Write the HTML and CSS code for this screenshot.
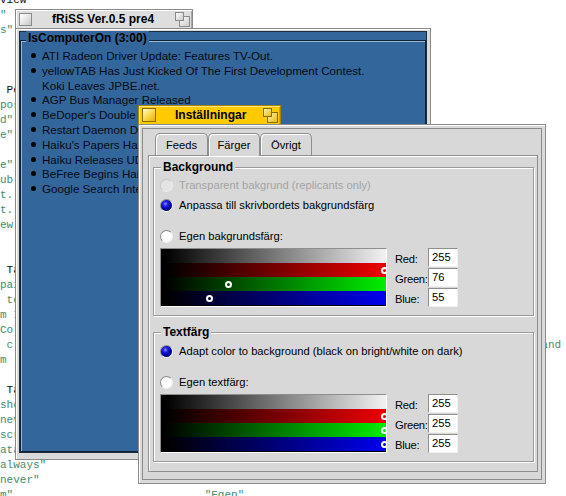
FILE: index.html
```html
<!DOCTYPE html>
<html lang="sv">
<head>
<meta charset="utf-8">
<title>fRiSS</title>
<link rel="stylesheet" href="styles.css">
</head>
<body>
<pre class="desk"><span class="k">view</span>
"
s"



<span class="k"> Pe</span>
pos
d"
e"

e"
ub
t.
t.
ew


<span class="k"> Ta</span>
pai
 te
m I
Col
 c                                                                                and
m '

<span class="k"> Ta</span>
sho
nev
scr
ata
always"
never"
m"                             "Egen"</pre>

<div class="win win-main">
  <div class="wtab wtab-main">
    <span class="closebox closebox-gray"></span>
    <span class="wtitle wtitle-main">fRiSS Ver.0.5 pre4</span>
    <svg class="zoombox" width="15" height="15" viewBox="0 0 15 15">
      <defs>
        <linearGradient id="zg" x1="0" y1="0" x2="1" y2="1">
          <stop offset="0" stop-color="#ffffff"/>
          <stop offset="1" stop-color="#c8c8c8"/>
        </linearGradient>
      </defs>
      <rect x="4.5" y="4.5" width="10" height="10" fill="url(#zg)" stroke="#8a8a8a"/>
      <rect x="0.5" y="0.5" width="8" height="8" fill="url(#zg)" stroke="#8a8a8a"/>
    </svg>
  </div>
  <div class="wframe wframe-main">
    <div class="feedview">
      <div class="nbox">
        <div class="nbox-label">IsComputerOn (3:00)</div>
        <ul class="items">
          <li>ATI Radeon Driver Update: Features TV-Out.</li>
          <li>yellowTAB Has Just Kicked Of The First Development Contest.</li>
          <li class="cont">Koki Leaves JPBE.net.</li>
          <li>AGP Bus Manager Released</li>
          <li>BeDoper's Double Dose of BeOS News</li>
          <li>Restart Daemon Does Its Job</li>
          <li>Haiku's Papers Have Arrived</li>
          <li>Haiku Releases UDF Support</li>
          <li>BeFree Begins Haiku Coverage</li>
          <li>Google Search Integration</li>
        </ul>
      </div>
    </div>
  </div>
</div>

<div class="win win-prefs">
  <div class="wtab wtab-prefs">
    <span class="closebox closebox-yellow"></span>
    <span class="wtitle wtitle-prefs">Inställningar</span>
    <svg class="zoombox" width="15" height="15" viewBox="0 0 15 15">
      <defs>
        <linearGradient id="zy" x1="0" y1="0" x2="1" y2="1">
          <stop offset="0" stop-color="#fff6c0"/>
          <stop offset="1" stop-color="#e8b400"/>
        </linearGradient>
      </defs>
      <rect x="4.5" y="4.5" width="10" height="10" fill="url(#zy)" stroke="#8a6a00"/>
      <rect x="0.5" y="0.5" width="8" height="8" fill="url(#zy)" stroke="#8a6a00"/>
    </svg>
  </div>
  <div class="wframe wframe-prefs">
    <div class="panel">
      <div class="tabs">
        <div class="tab tab-feeds">Feeds</div>
        <div class="tab tab-sel">Färger</div>
        <div class="tab tab-ovr">Övrigt</div>
      </div>
      <div class="tbody">
        <div class="gbox">
          <div class="glabel">Background</div>
          <div class="rrow dis"><span class="radio radio-dis"></span>Transparent bakgrund (replicants only)</div>
          <div class="rrow"><span class="radio radio-on"></span>Anpassa till skrivbordets bakgrundsfärg</div>
          <div class="rrow gap"><span class="radio"></span>Egen bakgrundsfärg:</div>
          <div class="cc">
            <div class="ramp">
              <div class="rr rr-gray"></div>
              <div class="rr rr-red"><span class="mark" style="left:219.5px"></span></div>
              <div class="rr rr-green"><span class="mark" style="left:63.7px"></span></div>
              <div class="rr rr-blue"><span class="mark" style="left:45.4px"></span></div>
            </div>
            <div class="cf">
              <span class="cl">Red:</span><span class="inp">255</span>
              <span class="cl">Green:</span><span class="inp">76</span>
              <span class="cl">Blue:</span><span class="inp">55</span>
            </div>
          </div>
        </div>
        <div class="gbox gbox-2">
          <div class="glabel">Textfärg</div>
          <div class="rrow first"><span class="radio radio-on"></span>Adapt color to background (black on bright/white on dark)</div>
          <div class="rrow gap"><span class="radio"></span>Egen textfärg:</div>
          <div class="cc">
            <div class="ramp">
              <div class="rr rr-gray"></div>
              <div class="rr rr-red"><span class="mark" style="left:219.5px"></span></div>
              <div class="rr rr-green"><span class="mark" style="left:219.5px"></span></div>
              <div class="rr rr-blue"><span class="mark" style="left:219.5px"></span></div>
            </div>
            <div class="cf">
              <span class="cl">Red:</span><span class="inp">255</span>
              <span class="cl">Green:</span><span class="inp">255</span>
              <span class="cl">Blue:</span><span class="inp">255</span>
            </div>
          </div>
        </div>
      </div>
    </div>
  </div>
</div>
</body>
</html>
```

FILE: styles.css
```css
* { box-sizing: border-box; }
html, body { margin: 0; padding: 0; }
body {
  width: 566px;
  height: 496px;
  overflow: hidden;
  background: #ffffff;
  position: relative;
  font-family: "Liberation Sans", Arial, sans-serif;
  color: #000;
}

/* background code editor text */
.desk {
  margin: -7.5px 0 0 0;
  font-family: "Liberation Mono", "Courier New", monospace;
  font-size: 11px;
  line-height: 15px;
  color: #3f8c70;
  white-space: pre;
}
.desk .k { color: #111; }

/* windows */
.win {
  position: absolute;
  display: flex;
  flex-direction: column;
  align-items: flex-start;
}
.win-main { left: 15px; top: 9px; }
.win-prefs { left: 138px; top: 105px; }

.wtab {
  height: 19px;
  display: flex;
  align-items: center;
  border: 1px solid #8a8a8a;
  border-bottom: none;
  box-shadow: inset 1px 1px 0 #ffffff, inset -1px 0 0 #a8a8a8;
  padding: 0 2px 0 3px;
}
.wtab-main { width: 178px; background: #dedede; }
.wtab-prefs {
  width: 143px;
  background: #ffcb00;
  border-color: #a88400;
  box-shadow: inset 1px 1px 0 #ffe680, inset -1px 0 0 #d8a800;
}

.closebox {
  width: 13px;
  height: 13px;
  flex: none;
  border: 1px solid;
}
.closebox-gray {
  border-color: #8a8a8a;
  background: linear-gradient(135deg, #ffffff 0%, #f0f0f0 35%, #c4c4c4 100%);
}
.closebox-yellow {
  width: 14px;
  height: 14px;
  border-color: #8a6a00;
  background: linear-gradient(135deg, #fffbe0 0%, #ffe060 40%, #e6b000 100%);
}

.wtitle {
  font-weight: bold;
  font-size: 12px;
  white-space: nowrap;
}
.wtitle-main { margin-left: 20px; }
.wtitle-prefs { margin-left: 19px; }
.zoombox { margin-left: auto; flex: none; }

.wframe {
  border: 1px solid #8a8a8a;
  background: #dadada;
  box-shadow: inset 1px 1px 0 #ffffff;
  display: flex;
}
.wframe-main {
  width: 416px;
  height: 432px;
  padding: 2px 3px 6px 3px;
}
.wframe-prefs {
  width: 408px;
  height: 360px;
  padding: 3px;
}

/* main window content */
.feedview {
  flex: 1;
  border: 1px solid #1c2c3c;
  background: #33669a;
  display: flex;
  flex-direction: column;
}
.nbox {
  flex: 1;
  margin-top: 8px;
  border: 1px solid #0e2238;
  box-shadow: inset 1px 1px 0 #9ab6d2;
}
.nbox-label {
  width: max-content;
  height: 14px;
  line-height: 14px;
  margin: -10px 0 0 5px;
  padding: 0 2px;
  background: #33669a;
  font-weight: bold;
  font-size: 12px;
  color: #000;
}
.items {
  list-style: none;
  margin: 4px 0 0 0;
  padding: 0 0 0 21px;
  font-size: 11.6px;
  line-height: 14.8px;
  color: #040a14;
}
.items li { white-space: nowrap; }
.items li::before {
  content: "";
  display: inline-block;
  width: 5px;
  height: 5px;
  border-radius: 50%;
  background: #000;
  margin: 0 6px 0 -11px;
  vertical-align: 2px;
}
.items li.cont::before { visibility: hidden; }

/* preferences window */
.panel {
  flex: 1;
  border: 1px solid #8a8a8a;
  background: #d8d8d8;
  padding: 4px 3px 7px 5px;
  display: flex;
  flex-direction: column;
  font-size: 11.2px;
}
.tabs {
  display: flex;
  height: 22px;
  padding-left: 7px;
}
.tab {
  width: 52px;
  border: 1px solid #8e8e8e;
  border-bottom: none;
  border-radius: 5px 5px 0 0;
  box-shadow: inset 1px 1px 0 #ffffff;
  background: #d8d8d8;
  display: flex;
  align-items: center;
  justify-content: center;
}
.tab-feeds { width: 53px; }
.tab-sel {
  margin-bottom: -1px;
  position: relative;
  z-index: 1;
}
.tbody {
  flex: 1;
  border: 1px solid #8e8e8e;
  box-shadow: inset 1px 1px 0 #ffffff;
  display: flex;
  flex-direction: column;
}
.gbox {
  margin: 11px 3px 0 4px;
  padding: 0 6px 8px 6px;
  border: 1px solid #9a9a9a;
  box-shadow: inset 1px 1px 0 #ffffff, 1px 1px 0 #ffffff;
}
.gbox-2 { margin-top: 16px; }
.glabel {
  width: max-content;
  height: 15px;
  line-height: 15px;
  margin: -8px 0 0 1px;
  padding: 0 2px;
  background: #d8d8d8;
  font-weight: bold;
  font-size: 12px;
}
.rrow {
  height: 20px;
  display: flex;
  align-items: center;
  white-space: nowrap;
}
.rrow.first { margin-top: 1px; }
.rrow.gap { margin-top: 11px; }
.rrow.dis { color: #a4a4a4; }

.radio {
  flex: none;
  width: 13px;
  height: 13px;
  margin-right: 6px;
  border-radius: 50%;
  border: 1px solid;
  border-color: #8c8c8c #f4f4f4 #f4f4f4 #8c8c8c;
  background: radial-gradient(circle at 45% 45%, #ffffff 55%, #dcdcdc 100%);
}
.radio-on {
  background: radial-gradient(circle at 40% 35%, #9090ff 0, #2828e8 22%, #0000b0 50%, #00006a 75%, #202020 100%);
}
.radio-dis {
  border-color: #c6c6c6 #ececec #ececec #c6c6c6;
  background: #e4e4e4;
}

/* colour control */
.cc {
  display: flex;
  margin-top: 2px;
}
.ramp {
  width: 227px;
  height: 59px;
  flex: none;
  border: 1px solid;
  border-color: #8e8e8e #ffffff #ffffff #8e8e8e;
  padding-bottom: 1px;
  background: #000;
  display: flex;
  flex-direction: column;
  overflow: hidden;
}
.rr {
  height: 14px;
  position: relative;
}
.rr-gray { background: linear-gradient(to right, #000 0%, #000 2%, #f2f2f2 100%); }
.rr-red { background: linear-gradient(to right, #000 0%, #000 2%, #ee0000 100%); }
.rr-green { background: linear-gradient(to right, #000 0%, #000 2%, #00ee00 100%); }
.rr-blue { background: linear-gradient(to right, #000 0%, #000 2%, #0000ee 100%); }
.mark {
  position: absolute;
  top: 3.5px;
  width: 7px;
  height: 7px;
  border: 2px solid #ffffff;
  border-radius: 50%;
}
.cf {
  display: grid;
  grid-template-columns: 33px 30px;
  grid-auto-rows: 19px;
  row-gap: 1px;
  margin-left: 8px;
}
.cl {
  display: flex;
  align-items: center;
  padding-top: 2px;
  white-space: nowrap;
  letter-spacing: -0.25px;
}
.inp {
  border: 1px solid;
  border-color: #8e8e8e #f0f0f0 #f0f0f0 #8e8e8e;
  background: #ffffff;
  padding: 1px 0 0 3px;
  line-height: 14px;
}
```
